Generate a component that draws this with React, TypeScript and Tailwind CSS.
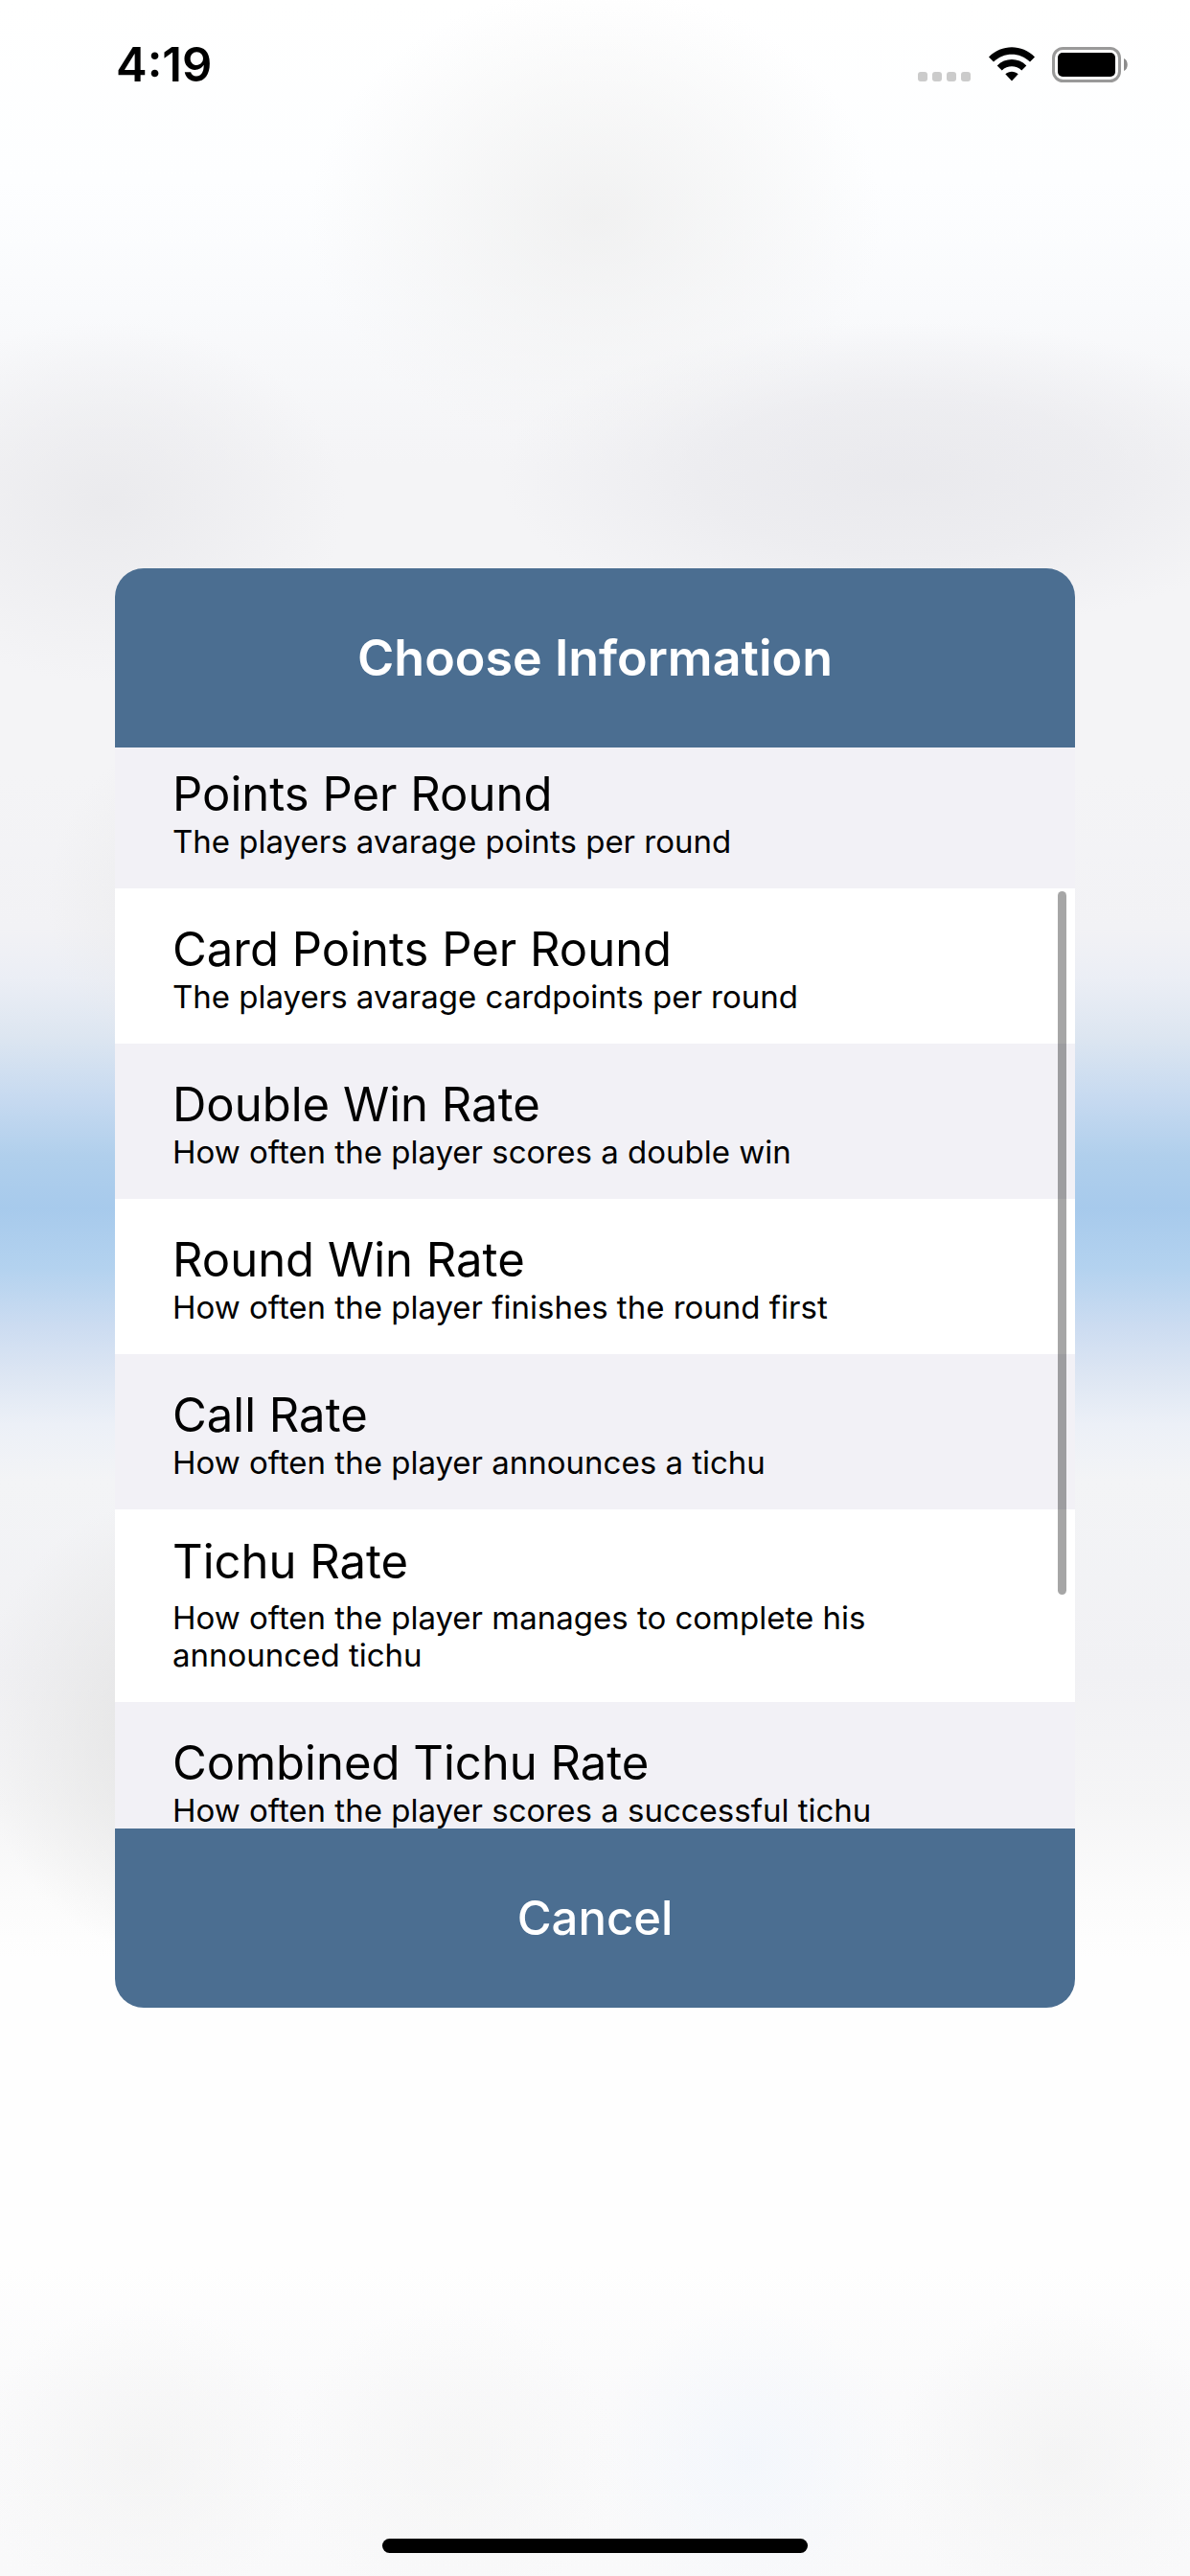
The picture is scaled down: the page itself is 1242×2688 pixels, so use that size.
import React, { useEffect, useRef } from "react";

const options = [
  {
    title: "Points Per Round",
    description: "The players avarage points per round",
  },
  {
    title: "Card Points Per Round",
    description: "The players avarage cardpoints per round",
  },
  {
    title: "Double Win Rate",
    description: "How often the player scores a double win",
  },
  {
    title: "Round Win Rate",
    description: "How often the player finishes the round first",
  },
  {
    title: "Call Rate",
    description: "How often the player announces a tichu",
  },
  {
    title: "Tichu Rate",
    description: "How often the player manages to complete his announced tichu",
    long: true,
  },
  {
    title: "Combined Tichu Rate",
    description: "How often the player scores a successful tichu",
  },
];

const StatusBar = () => (
  <header className="flex h-[132px] items-start justify-between pt-10 pr-16 pl-[121px]">
    <time className="text-[49px] leading-[56px] font-semibold">4:19</time>
    <div className="flex items-center gap-[18px] pt-2">
      <svg width="56" height="40" viewBox="0 0 56 40" aria-hidden="true">
        <g fill="#cbcbcb">
          <rect x="0" y="27" width="10" height="10" rx="3" />
          <rect x="15" y="27" width="10" height="10" rx="3" />
          <rect x="30" y="27" width="10" height="10" rx="3" />
          <rect x="45" y="27" width="10" height="10" rx="3" />
        </g>
      </svg>
      <svg width="48" height="40" viewBox="0 0 48 40" aria-hidden="true">
        <path d="M0 11.5C13.5-2.2 34.5-2.2 48 11.5L43 16.5C32.3 6 15.7 6 5 16.5Z" />
        <path d="M8.7 20.4C17.3 12 30.7 12 39.3 20.4L34.3 25.4C28.5 19.8 19.5 19.8 13.7 25.4Z" />
        <path d="M17.3 29.2C21 25.8 27 25.8 30.7 29.2L24 36.5Z" />
      </svg>
      <svg width="80" height="40" viewBox="0 0 80 40" aria-hidden="true">
        <rect
          x="1.5"
          y="2.5"
          width="69"
          height="34"
          rx="10"
          fill="none"
          stroke="#999"
          strokeWidth="3"
        />
        <rect x="6" y="7" width="60" height="25" rx="5" />
        <path d="M75 13c5 2 5 11 0 13z" fill="#8c8c8c" />
      </svg>
    </div>
  </header>
);

const App = () => {
  const listRef = useRef<HTMLUListElement>(null);

  useEffect(() => {
    if (listRef.current) {
      listRef.current.scrollTop = 15;
    }
  }, []);

  return (
    // soft gradients stand for the blurred screen behind the dialog
    <div className="flex min-h-screen flex-col bg-[radial-gradient(24%_9%_at_50%_8.5%,#eeeeeecc,#f1f1f180_50%,#f4f4f400),radial-gradient(34%_6%_at_76%_18.5%,#e7e7ebcc,#e8e8ec99_50%,#eeeef000),radial-gradient(20%_7%_at_9%_19.5%,#e8e8ebcc,#eaeaed80_50%,#eeeef000),radial-gradient(15%_7%_at_19%_35%,#e8e8e8cc,#eeeeee00),radial-gradient(17%_9%_at_15%_67%,#e3e3e3,#e6e6e699_50%,#eeeeee00),radial-gradient(14%_6%_at_12%_95.5%,#f3f3f3cc,#f7f7f700),radial-gradient(14%_6%_at_38%_95.5%,#f5f5f5cc,#f7f7f700),radial-gradient(13%_6%_at_63%_95.5%,#f2f6fccc,#f7f8fc00),radial-gradient(14%_6%_at_89%_95.5%,#f3f3f3cc,#f7f7f700),linear-gradient(to_bottom,#ffffff_0%,#fdfeff_7%,#f9fafc_12%,#f4f4f6_18%,#f4f4f6_30%,#f2f2f5_36%,#ebeef5_38%,#dde6f1_40.2%,#c5d9f0_42.8%,#b0cfec_44.9%,#a7caec_46.9%,#b3d2ef_49.2%,#ccdcf1_51.5%,#dde6f3_53.4%,#ecf0f7_55.3%,#f3f4f6_57.5%,#f1f1f4_65%,#f5f5f6_70%,#fbfbfb_73.5%,#fefefe_76%,#fefefe_88%,#fafafb_93%,#f9f9fa_100%)] font-['Inter',sans-serif] text-black">
      <StatusBar />

      <main className="flex flex-1 items-center px-[120px]">
        <section
          role="dialog"
          aria-labelledby="dialog-title"
          className="w-full overflow-hidden rounded-[30px] bg-[#4b6e91]"
        >
          <h1
            id="dialog-title"
            className="py-[62px] text-center text-[52px] leading-[63px] font-semibold text-white"
          >
            Choose Information
          </h1>

          <div className="relative">
            <ul
              ref={listRef}
              className="max-h-[42vh] overflow-y-auto [scrollbar-width:none]"
            >
              {options.map((option) => (
                <li key={option.title} className="odd:bg-[#f2f1f6] even:bg-white">
                  <button
                    type="button"
                    className={`flex w-full flex-col px-[60px] pb-[29px] text-left ${
                      option.long ? "gap-[9px] pt-[25px]" : "pt-[34px]"
                    }`}
                  >
                    <span className="text-[49px] leading-[60px]">
                      {option.title}
                    </span>
                    <span className="text-[33px] leading-[39px]">
                      {option.description}
                    </span>
                  </button>
                </li>
              ))}
            </ul>
            {/* scroll indicator */}
            <div className="absolute inset-y-0 right-0 flex pt-[150px] pr-[9px]">
              <div className="h-3/4 w-[9px] rounded-full bg-black/35" />
            </div>
          </div>

          <button
            type="button"
            className="block w-full py-[62px] text-center text-[49px] leading-[63px] font-medium text-white"
          >
            Cancel
          </button>
        </section>
      </main>

      <footer className="flex h-[132px] items-end justify-center pb-6">
        <div className="h-[15px] w-[444px] rounded-full bg-black" />
      </footer>
    </div>
  );
};

export default App;
